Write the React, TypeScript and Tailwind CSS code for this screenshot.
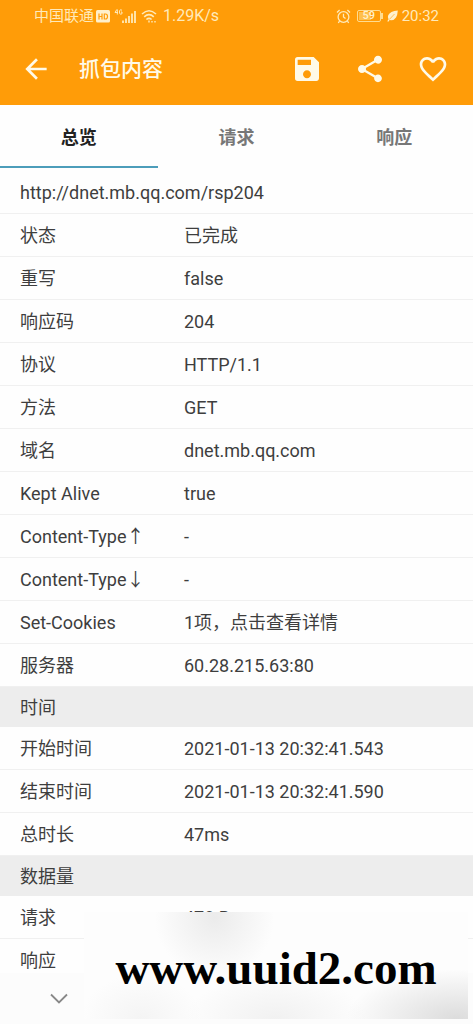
import { useState } from "react";
import { MdArrowBack, MdFavoriteBorder, MdSave, MdShare } from "react-icons/md";

const tabs = ["总览", "请求", "响应"];

const sections = [
  {
    title: "",
    rows: [
      ["状态", "已完成"],
      ["重写", "false"],
      ["响应码", "204"],
      ["协议", "HTTP/1.1"],
      ["方法", "GET"],
      ["域名", "dnet.mb.qq.com"],
      ["Kept Alive", "true"],
      ["Content-Type↑", "-"],
      ["Content-Type↓", "-"],
      ["Set-Cookies", "1项，点击查看详情"],
      ["服务器", "60.28.215.63:80"],
    ],
  },
  {
    title: "时间",
    rows: [
      ["开始时间", "2021-01-13 20:32:41.543"],
      ["结束时间", "2021-01-13 20:32:41.590"],
      ["总时长", "47ms"],
    ],
  },
  {
    title: "数据量",
    rows: [
      ["请求", "478 B"],
      ["响应", ""],
    ],
  },
];

function StatusBar() {
  return (
    <div className="flex h-8 items-center justify-between px-[34px] text-[15px] leading-5 text-[#ffeaba]">
      <div className="flex items-center">
        <span>中国联通</span>
        {/* HD badge */}
        <svg className="ml-0.5" width="14" height="13" viewBox="0 0 14 13">
          <rect width="14" height="12.5" rx="1.5" fill="#fff0cc" />
          <path d="M3 3.5v6M6 3.5v6M3 6.5h3M8.3 3.5v6M8.3 4h1.2q2 0 2 2.5t-2 2.5H8.3" fill="none" stroke="#ff9c08" strokeWidth="1.2" />
        </svg>
        {/* 4G signal */}
        <svg className="ml-1" width="23" height="16" viewBox="0 0 23 16">
          <path d="M2.8 1.5 1 4.5h3M3.3 1.5v5M8 2.3q-2.5-1.6-2.5 1.7t2.5 1.7V4H7" fill="none" stroke="currentColor" strokeWidth="1" />
          <path d="M9 12.5V15M12 10.5V15M15 8v7M18 5.5V15M21 3v12" stroke="currentColor" strokeWidth="1.8" />
        </svg>
        <svg className="ml-1" width="16" height="14" viewBox="0 0 16 14">
          <path d="M1 5q7-6.5 14 0M3.2 7.800q4.800-4.400 9.600 0M5.400 10.500q2.600-2.200 5.200 0" fill="none" stroke="currentColor" strokeWidth="1.6" />
          <path d="M8 11.5v2M11 12v1.5M14 12v1.5" stroke="currentColor" strokeWidth="1.4" />
        </svg>
        <span className="ml-1.5 text-base leading-5">1.29K/s</span>
      </div>
      <div className="flex items-center">
        <svg width="15" height="15" viewBox="0 0 15 15" fill="none" stroke="currentColor" strokeWidth="1.3">
          <circle cx="7.5" cy="8" r="5.4" />
          <path d="M7.5 4.8V8l2 1.6M1 3.5 3.6 1M14 3.5 11.4 1M3.5 12.2 2.3 14M11.5 12.2l1.2 1.8" />
        </svg>
        <div className="relative ml-1.5 flex h-3 w-6 items-center justify-center rounded-xs border border-[#ffdc90]">
          <span className="absolute inset-y-px left-px w-3 bg-[#ffc04e]" />
          <span className="relative text-[11px] leading-3 font-medium text-[#fff0cc]">59</span>
        </div>
        <span className="h-1.5 w-0.5 bg-[#ffdc90]" />
        <svg className="mx-1" width="11" height="12" viewBox="0 0 11 12">
          <path d="M10.8.4Q3 1 1.2 5.3.3 7.5 1.5 9.2L.3 11.2l1 .6 1.3-1.7Q7 10.800 9 7.500 10.500 5 10.800.4Z" fill="#fff0cc" />
          <path d="M2.3 9.5 7.5 4" stroke="#ff9c08" strokeWidth="0.6" />
        </svg>
        <time>20:32</time>
      </div>
    </div>
  );
}

function AppBar() {
  return (
    <div className="flex h-[73px] items-center pr-6 pl-5 text-[#fffae8]">
      <button aria-label="返回">
        <MdArrowBack className="size-8" />
      </button>
      <h1 className="ml-[27px] flex-1 text-[21px] leading-8 font-medium">抓包内容</h1>
      <div className="flex gap-[31px]">
        <button aria-label="保存">
          <MdSave className="size-8" />
        </button>
        <button aria-label="分享">
          <MdShare className="size-8" />
        </button>
        <button aria-label="收藏">
          <MdFavoriteBorder className="size-8" />
        </button>
      </div>
    </div>
  );
}

export default function App() {
  const [active, setActive] = useState(0);

  return (
    <div className="relative flex h-screen flex-col overflow-hidden bg-[#fefefe] font-['Roboto','Noto_Sans_CJK_SC',sans-serif] text-[#3e3e3e]">
      <header className="shrink-0 bg-[#ff9c08]">
        <StatusBar />
        <AppBar />
      </header>

      <nav className="grid h-[63px] shrink-0 grid-cols-3">
        {tabs.map((tab, i) => (
          <button
            key={tab}
            onClick={() => setActive(i)}
            className={`border-b-2 pt-1 text-lg font-bold ${
              i === active ? "border-[#4c9dba] text-[#222222]" : "border-transparent text-[#777777]"
            }`}
          >
            {tab}
          </button>
        ))}
      </nav>

      <main className="min-h-0 flex-1 overflow-y-auto [scrollbar-width:none]">
        <p className="flex h-[46px] items-center border-b border-[#f0f0f0] px-5 pt-1 text-lg">http://dnet.mb.qq.com/rsp204</p>
        <table className="w-full table-fixed border-separate border-spacing-0 text-left text-lg leading-6">
          <colgroup>
            <col className="w-[184px]" />
            <col />
          </colgroup>
          {sections.map(({ title, rows }) => (
            <tbody key={title}>
              {title && (
                <tr>
                  <th colSpan={2} className="h-10 bg-[#ededed] pt-0.5 pl-5 font-normal">
                    {title}
                  </th>
                </tr>
              )}
              {rows.map(([label, value]) => (
                <tr key={label}>
                  <th className="h-[43px] border-b border-[#f0f0f0] pt-0.5 pl-5 font-normal">{label}</th>
                  <td className="h-[43px] border-b border-[#f0f0f0] pt-0.5">{value}</td>
                </tr>
              ))}
            </tbody>
          ))}
        </table>
      </main>

      <footer className="h-[51px] shrink-0 bg-[#fcfcfc] pl-[47px]">
        <button aria-label="收起" className="flex h-full w-6 items-center justify-center">
          <svg width="20" height="12" viewBox="0 0 20 12" fill="none" stroke="#888888" strokeWidth="1.8">
            <path d="M2 1.5 10 9.5l8-8" />
          </svg>
        </button>
      </footer>

      {/* Smudged patch with the site address over it */}
      <div className="absolute right-[5px] bottom-[5px] left-[84px] flex h-[107px] items-center justify-center bg-[#fdfdfd] bg-[radial-gradient(ellipse_60px_60px_at_34%_5%,#ebebeb,transparent),radial-gradient(ellipse_110px_50px_at_97%_100%,#dcdcdc,transparent),radial-gradient(ellipse_90px_45px_at_50%_100%,#f1f1f1,transparent),radial-gradient(ellipse_60px_45px_at_15%_100%,#f4f4f4,transparent)] pt-1">
        <span className="font-['Liberation_Serif',serif] text-[47px] leading-[52px] font-bold text-black">www.uuid2.com</span>
      </div>
    </div>
  );
}
